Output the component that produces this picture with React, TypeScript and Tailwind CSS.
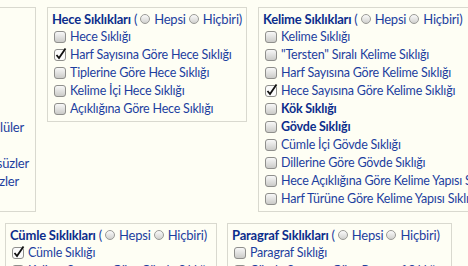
import React from 'react';

// Old GTK-style checkbox
function Check({ checked }: { checked?: boolean }) {
  return (
    <svg width="13" height="14" viewBox="0 0 13 14" className="shrink-0 mr-[3px] ml-[2px]">
      <defs>
        <linearGradient id="cbg" x1="0" y1="0" x2="0" y2="1">
          <stop offset="0" stopColor="#fafafa" />
          <stop offset="1" stopColor="#c9c9c6" />
        </linearGradient>
      </defs>
      <rect x="0.5" y="1.5" width="11" height="11" rx="2.5" fill={checked ? '#fbfbfb' : 'url(#cbg)'} stroke="#8f8f8c" />
      {checked && <path d="M2.5 7 L5 10 L11.5 0.5" fill="none" stroke="#111" strokeWidth="1.8" />}
    </svg>
  );
}

function Radio() {
  return (
    <svg width="10" height="10" viewBox="0 0 10 10" className="shrink-0 ml-[3px] mr-[4px]">
      <defs>
        <linearGradient id="rbg" x1="0" y1="0" x2="0" y2="1">
          <stop offset="0" stopColor="#fdfdfd" />
          <stop offset="1" stopColor="#cfcfcc" />
        </linearGradient>
      </defs>
      <circle cx="5" cy="5" r="4.5" fill="url(#rbg)" stroke="#9a9a96" />
    </svg>
  );
}

interface Item {
  label: string;
  checked?: boolean;
  bold?: boolean;
}

function Box({ title, items, className }: { title: string; items: Item[]; className?: string }) {
  return (
    <div className={`border border-[#d9d9cf] px-[4px] pt-[2px] pb-[3px] shrink-0 ${className ?? ''}`}>
      <div className="flex items-center whitespace-nowrap text-[13px]">
        <span className="font-bold text-[#0c2d8c]">{title}</span>
        <span className="ml-[3px]">(</span>
        <Radio />
        <span>Hepsi</span>
        <Radio />
        <span>Hiçbiri)</span>
      </div>
      {items.map((it) => (
        <div key={it.label} className="flex items-center whitespace-nowrap">
          <Check checked={it.checked} />
          <span className={it.bold ? 'font-bold text-[#0c2d8c]' : ''}>{it.label}</span>
        </div>
      ))}
    </div>
  );
}

const hece: Item[] = [
  { label: 'Hece Sıklığı' },
  { label: 'Harf Sayısına Göre Hece Sıklığı', checked: true },
  { label: 'Tiplerine Göre Hece Sıklığı' },
  { label: 'Kelime İçi Hece Sıklığı' },
  { label: 'Açıklığına Göre Hece Sıklığı' },
];

const kelime: Item[] = [
  { label: 'Kelime Sıklığı' },
  { label: '"Tersten" Sıralı Kelime Sıklığı' },
  { label: 'Harf Sayısına Göre Kelime Sıklığı' },
  { label: 'Hece Sayısına Göre Kelime Sıklığı', checked: true },
  { label: 'Kök Sıklığı', bold: true },
  { label: 'Gövde Sıklığı', bold: true },
  { label: 'Cümle İçi Gövde Sıklığı' },
  { label: 'Dillerine Göre Gövde Sıklığı' },
  { label: 'Hece Açıklığına Göre Kelime Yapısı Sıklığı' },
  { label: 'Harf Türüne Göre Kelime Yapısı Sıklığı' },
];

const cumle: Item[] = [
  { label: 'Cümle Sıklığı', checked: true },
  { label: 'Kelime Sayısına Göre Cümle Sıklığı' },
];

const paragraf: Item[] = [
  { label: 'Paragraf Sıklığı' },
  { label: 'Cümle Sayısına Göre Paragraf Sıklığı' },
];

// rows of the harf box that is cut off at the left edge: only the tails show
const harfTails = ['', '', '', '', '', 'lüler', '', 'süzler', 'zler', ''];
const harfPads = ['', '', '', '', '', 'pr-[11px]', '', 'pr-[6px]', 'pr-[16px]', ''];

export default function App() {
  return (
    <div className="min-h-screen w-full overflow-hidden bg-[#fefef4] font-['Lato',sans-serif] text-[12.5px] tracking-[-0.2px] leading-[18px] text-[#1d3e9f]">
      <div className="flex items-start gap-[11px] pt-[7px] ml-[-150px] w-max">
        <div className="w-[186px] border border-[#d9d9cf] pt-[2px] pb-[3px] shrink-0 text-[13px]">
          <div className="h-[18px]" />
          {harfTails.map((t, i) => (
            <div key={i} className={`h-[18px] text-right whitespace-nowrap ${harfPads[i]}`}>
              {t}
            </div>
          ))}
        </div>
        <Box title="Hece Sıklıkları" items={hece} className="w-[200px]" />
        <Box title="Kelime Sıklıkları" items={kelime} />
      </div>
      <div className="flex items-start gap-[10px] pt-[11px] pl-[5px]">
        <Box title="Cümle Sıklıkları" items={cumle} className="w-[212px]" />
        <Box title="Paragraf Sıklıkları" items={paragraf} className="w-[225px]" />
      </div>
    </div>
  );
}
